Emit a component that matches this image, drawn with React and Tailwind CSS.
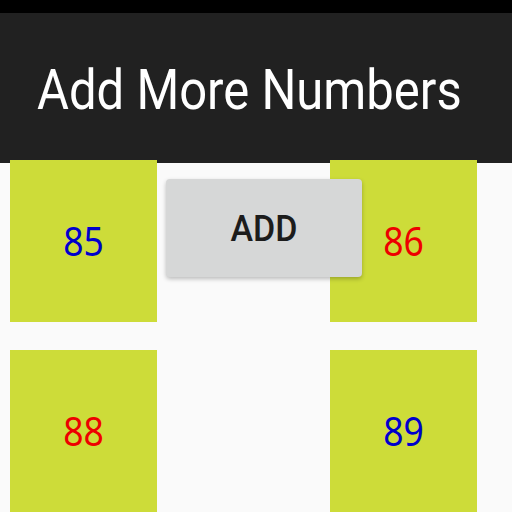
import React from 'react';

const rows = [
  [
    { n: 85, color: 'text-[#0000cc]' },
    null,
    { n: 86, color: 'text-[#ee0000]' },
  ],
  [
    { n: 88, color: 'text-[#ee0000]' },
    null,
    { n: 89, color: 'text-[#0000cc]' },
  ],
];

const Tile = ({ item }) => {
  if (!item) return <div className="w-[147px] h-[162px]" />;
  return (
    <div className="w-[147px] h-[162px] bg-[#cddc39] flex items-center justify-center">
      <span
        className={`text-[35.5px] leading-none scale-y-[1.13] ${item.color}`}
        style={{ fontFamily: '"Noto Sans", "DejaVu Sans", sans-serif' }}
      >
        {item.n}
      </span>
    </div>
  );
};

export default function App() {
  return (
    <div className="w-[512px] h-[512px] overflow-hidden bg-[#fafafa] flex flex-col" style={{ fontFamily: 'Roboto, "Noto Sans", sans-serif' }}>
      {/* status bar */}
      <div className="h-[13px] bg-black shrink-0" />

      {/* title bar */}
      <div className="h-[150px] bg-[#212121] shrink-0 flex items-center pl-[37px] pt-[4px]">
        <h1 className="text-white text-[49px] leading-none font-normal whitespace-nowrap scale-y-[1.13]">Add More Numbers</h1>
      </div>

      {/* number grid */}
      <div className="relative flex-1">
        <div className="flex flex-col gap-[28px] pl-[10px] -mt-[3px]">
          {rows.map((row, i) => (
            <div key={i} className="flex gap-[13px]">
              {row.map((item, j) => (
                <Tile key={j} item={item} />
              ))}
            </div>
          ))}
        </div>

        {/* floating add button */}
        <button className="absolute left-[166px] top-[16px] w-[196px] h-[98px] rounded-[4px] bg-[#d6d7d7] shadow-[0_2px_4px_rgba(0,0,0,0.25)] text-[#1c1c1c] text-[34px] font-medium flex items-center justify-center">
          <span className="scale-y-[1.08]">ADD</span>
        </button>
      </div>
    </div>
  );
}
